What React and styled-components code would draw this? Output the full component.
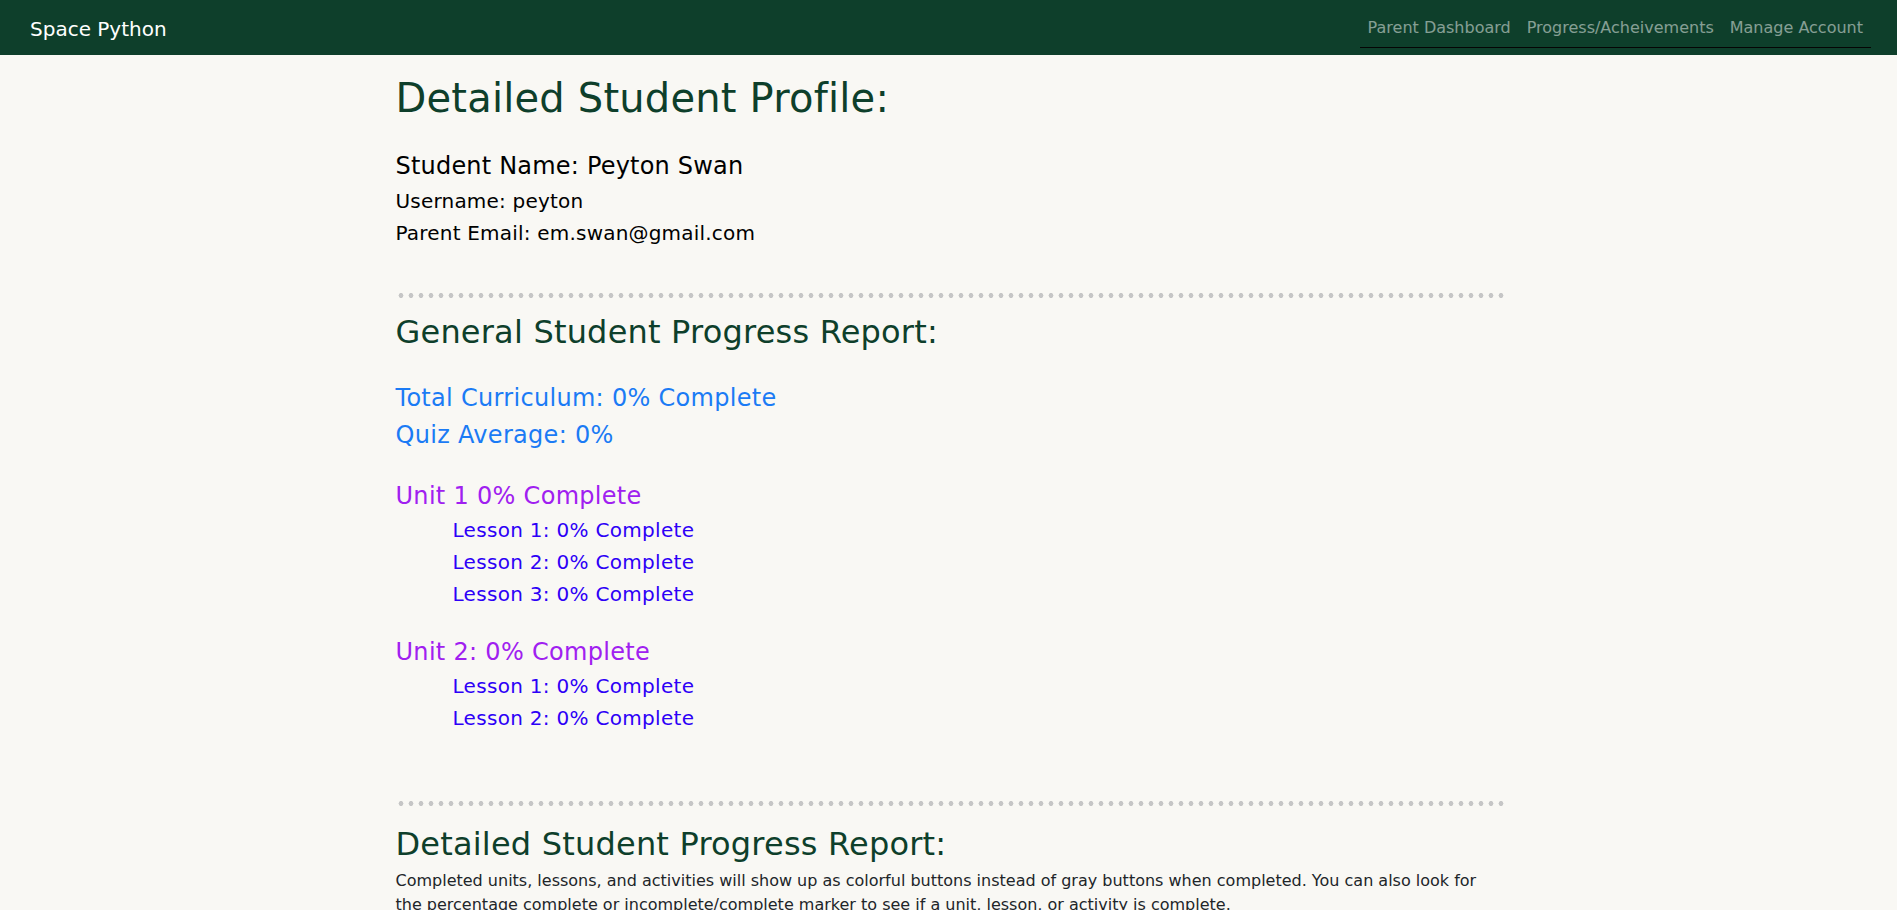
import styled, { createGlobalStyle } from "styled-components";

const GlobalStyle = createGlobalStyle`
  body {
    margin: 0;
    background: #f9f8f4;
    font-family: "DejaVu Sans", Verdana, sans-serif;
    color: #212529;
  }
`;

const units = [
  { title: "Unit 1 0% Complete", lessons: ["Lesson 1: 0% Complete", "Lesson 2: 0% Complete", "Lesson 3: 0% Complete"] },
  { title: "Unit 2: 0% Complete", lessons: ["Lesson 1: 0% Complete", "Lesson 2: 0% Complete"] },
];

export default function App() {
  return (
    <>
      <GlobalStyle />
      <Navbar>
        <Brand>Space Python</Brand>
        <NavList>
          <NavLink>Parent Dashboard</NavLink>
          <NavLink>Progress/Acheivements</NavLink>
          <NavLink>Manage Account</NavLink>
        </NavList>
      </Navbar>

      <Main>
        <Title>Detailed Student Profile:</Title>
        <StudentName>Student Name: Peyton Swan</StudentName>
        <Detail>Username: peyton</Detail>
        <Detail>Parent Email: em.swan@gmail.com</Detail>

        <Dots $top={44} />
        <SectionTitle $top={15}>General Student Progress Report:</SectionTitle>

        <Summary>
          <SummaryLine>Total Curriculum: 0% Complete</SummaryLine>
          <SummaryLine>Quiz Average: 0%</SummaryLine>
        </Summary>

        {units.map((unit, i) => (
          <UnitBlock key={unit.title} $first={i === 0}>
            <UnitTitle>{unit.title}</UnitTitle>
            <LessonList>
              {unit.lessons.map((lesson) => (
                <Lesson key={lesson}>{lesson}</Lesson>
              ))}
            </LessonList>
          </UnitBlock>
        ))}

        <Dots $top={67} />
        <SectionTitle $top={19}>Detailed Student Progress Report:</SectionTitle>
        <Intro>
          Completed units, lessons, and activities will show up as colorful buttons instead of gray
          buttons when completed. You can also look for the percentage complete or
          incomplete/complete marker to see if a unit, lesson, or activity is complete.
        </Intro>
      </Main>
    </>
  );
}

const Navbar = styled.nav`
  height: 55px;
  background: #0e3f2b;
  display: flex;
  justify-content: space-between;
  align-items: flex-start;
  padding: 0 26px 0 30px;
`;

const Brand = styled.div`
  margin-top: 17px;
  font-size: 20px;
  line-height: 24px;
  color: #ffffff;
`;

const NavList = styled.ul`
  list-style: none;
  margin: 8px 0 0;
  padding: 0;
  display: flex;
  border-bottom: 1px solid #050505;
`;

const NavLink = styled.li`
  padding: 8px 8px 7px;
  font-size: 16px;
  line-height: 24px;
  color: rgba(255, 255, 255, 0.5);
`;

const Main = styled.main`
  width: 1110px;
  margin-left: calc(50% - 553px);
  padding-top: 19px;
  padding-bottom: 40px;
`;

const Title = styled.h1`
  margin: 0;
  font-size: 40px;
  line-height: 48px;
  font-weight: normal;
  letter-spacing: 0.2px;
  color: #0e3f2b;
`;

const StudentName = styled.h4`
  margin: 30px 0 4px;
  font-size: 24px;
  line-height: 29px;
  font-weight: normal;
  letter-spacing: 0.2px;
  color: #000000;
`;

const Detail = styled.div`
  font-size: 20px;
  line-height: 32px;
  letter-spacing: 0.2px;
  color: #000000;
`;

const Dots = styled.div`
  margin-top: ${(p) => p.$top}px;
  height: 5px;
  background-image: radial-gradient(circle at center, #c6c6c6 2.2px, transparent 2.7px);
  background-size: 10px 5px;
  background-repeat: repeat-x;
`;

const SectionTitle = styled.h2`
  margin: ${(p) => p.$top}px 0 0;
  font-size: 32px;
  line-height: 38px;
  font-weight: normal;
  letter-spacing: 0.2px;
  color: #0e3f2b;
`;

const Summary = styled.div`
  margin-top: 29px;
`;

const SummaryLine = styled.div`
  font-size: 24px;
  line-height: 37px;
  letter-spacing: 0.3px;
  color: #1b7bf5;
`;

const UnitBlock = styled.section`
  margin-top: ${(p) => (p.$first ? 28 : 28)}px;
`;

const UnitTitle = styled.div`
  font-size: 24px;
  line-height: 29px;
  letter-spacing: 0.3px;
  color: #a020f0;
`;

const LessonList = styled.div`
  margin-top: 3px;
  padding-left: 57px;
`;

const Lesson = styled.div`
  font-size: 20px;
  line-height: 32px;
  letter-spacing: 0.3px;
  color: #2d00f7;
`;

const Intro = styled.p`
  margin: 6px 0 0;
  font-size: 16px;
  line-height: 24px;
  color: #212529;
`;
